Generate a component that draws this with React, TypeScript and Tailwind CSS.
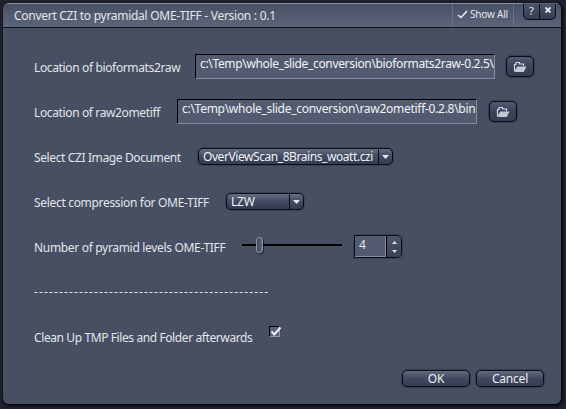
import React from "react";

function Label({ text, width, tracking }: { text: string; width: string; tracking: string }) {
  return <span className={`block shrink-0 pt-[2px] whitespace-pre ${width} ${tracking}`}>{text}</span>;
}

function Row({ children }: { children: React.ReactNode }) {
  return <div className="flex h-[45px] shrink-0 items-center">{children}</div>;
}

function PathField({ value, tracking }: { value: string; tracking: string }) {
  return (
    <div className={`h-[25px] w-[300px] shrink-0 border border-t-black border-r-[#858c9e] border-b-[#858c9e] border-l-black bg-[#535b70] pl-[4px] leading-[17px] whitespace-pre text-[#f1f2f5] ${tracking}`}>
      {value}
    </div>
  );
}

function FolderButton() {
  return (
    <button className="flex h-[21px] w-[28px] shrink-0 items-center justify-center rounded-[5px] border border-[#090d17] bg-linear-to-b from-[#515a70] via-[#3b435a] to-[#353d53] shadow-[0_0_1px_1px_#363e50]">
      <svg width="14" height="12" viewBox="0 0 14 12">
        <path d="M1.5 10V3.5H3V1.5H6.5V3H10.5V5" fill="none" stroke="#d5d8df" strokeWidth="1.2" />
        <path d="M4.2 5.5H13.5L10.8 11H1.2Z" fill="#c3c7d1" />
      </svg>
    </button>
  );
}

function Select({ value, width, tracking }: { value: string; width: string; tracking: string }) {
  return (
    <div className={`flex h-[17px] shrink-0 overflow-hidden rounded-[5px] border border-[#090d17] bg-linear-to-b from-[#646d82] via-[#414a60] to-[#343c52] shadow-[0_0_1px_1px_#3a4254] ${width}`}>
      <span className={`flex-1 pl-[4px] leading-[15px] whitespace-pre text-[#f1f2f5] ${tracking}`}>{value}</span>
      <span className="flex w-[14px] items-center justify-center border-l border-[#090d17]">
        <svg width="7" height="4" viewBox="0 0 7 4">
          <path d="M0 0H7L3.5 4Z" fill="#e4e6eb" />
        </svg>
      </span>
    </div>
  );
}

function PushButton({ text, tracking }: { text: string; tracking: string }) {
  return (
    <button className={`h-[17px] w-[68px] rounded-[5px] border border-[#090d17] bg-linear-to-b from-[#626b80] via-[#414960] via-50% to-[#363e54] text-center leading-[15px] text-[#eceef2] shadow-[0_0_1px_1px_#363e50] ${tracking}`}>
      {text}
    </button>
  );
}

export default function App() {
  return (
    <div className="h-[409px] w-[566px] overflow-hidden bg-[#20232f] pt-[3px] pl-[3px] font-['Noto_Sans','Open_Sans',sans-serif] text-[12px] leading-[16px] text-[#e3e5ea]">
      <div className="flex h-[401px] w-[558px] flex-col overflow-hidden rounded-[6px] bg-[#474f63] shadow-[1px_1px_3px_1px_#06080d]">
        <header className="flex h-[25px] shrink-0 border-t border-b border-t-[#8a90a0] border-b-[#0c1120] bg-linear-to-b from-[#485065] to-[#5d657a]">
          <h1 className="flex-1 pt-[4px] pl-[11px] tracking-[-0.28px] whitespace-pre">Convert CZI to pyramidal OME-TIFF - Version : 0.1</h1>
          <div className="flex w-[62px] items-center border-r border-l border-[#697186] pb-[3px] pl-[4px] text-[10px]">
            <svg width="11" height="9" viewBox="0 0 11 9">
              <path d="M1 5L4 7.5L10 1" fill="none" stroke="#e9ebef" strokeWidth="1.6" />
            </svg>
            <span className="pl-[2px] tracking-[-0.2px] whitespace-nowrap">Show All</span>
          </div>
          <div className="mr-[5px] ml-[9px] flex h-[16px] w-[33px] rounded-b-[5px] border border-t-0 border-[#080c15] bg-linear-to-b from-[#4c5469] to-[#343c52] shadow-[0_0_1px_1px_#555d71]">
            <span className="w-[16px] border-r border-[#080c15] text-center text-[11px] leading-[13px]">?</span>
            <span className="flex w-[15px] items-center justify-center pb-[3px]">
              <svg width="6" height="6" viewBox="0 0 6 6">
                <path d="M0.5 0.5L5.5 5.5M5.5 0.5L0.5 5.5" stroke="#eceef2" strokeWidth="1.8" />
              </svg>
            </span>
          </div>
        </header>

        <main className="flex flex-col pt-[16px] pl-[31px]">
          <Row>
            <Label text="Location of bioformats2raw" width="w-[161px]" tracking="tracking-[-0.36px]" />
            <PathField value="c:\Temp\whole_slide_conversion\bioformats2raw-0.2.5\" tracking="tracking-[-0.34px]" />
            <div className="ml-[11px]"><FolderButton /></div>
          </Row>
          <Row>
            <Label text="Location of raw2ometiff" width="w-[143px]" tracking="tracking-[-0.37px]" />
            <PathField value="c:\Temp\whole_slide_conversion\raw2ometiff-0.2.8\bin" tracking="tracking-[-0.28px]" />
            <div className="ml-[12px]"><FolderButton /></div>
          </Row>
          <Row>
            <Label text="Select CZI Image Document" width="w-[164px]" tracking="tracking-[-0.38px]" />
            <Select value="OverViewScan_8Brains_woatt.czi" width="w-[195px]" tracking="tracking-[-0.43px]" />
          </Row>
          <Row>
            <Label text="Select compression for OME-TIFF" width="w-[192px]" tracking="tracking-[-0.32px]" />
            <Select value="LZW" width="w-[78px]" tracking="tracking-[-0.2px]" />
          </Row>
          <Row>
            <Label text="Number of pyramid levels OME-TIFF" width="w-[208px]" tracking="tracking-[-0.32px]" />
            <div className="mb-[3px] flex h-[16px] w-[100px] shrink-0 items-center">
              <span className="h-[2px] w-[14px] bg-black" />
              <span className="h-[16px] w-[7px] rounded-[3px] border border-[#8b93a3] bg-linear-to-r from-[#3e475b] to-[#5e677b] shadow-[1px_1px_1px_#1b2232]" />
              <span className="h-[2px] flex-1 bg-black" />
            </div>
            <div className="ml-[12px] flex h-[23px] w-[48px] shrink-0 overflow-hidden rounded-r-[5px] border border-[#090d17] shadow-[0_0_1px_1px_#3a4254]">
              <span className="w-[31px] border-r border-b border-[#858c9e] bg-[#535b70] pl-[4px] leading-[17px]">4</span>
              <span className="flex flex-1 flex-col items-center justify-center gap-[6px] border-l border-black bg-linear-to-b from-[#4d556b] to-[#394157]">
                <svg width="5" height="3" viewBox="0 0 5 3"><path d="M0 3H5L2.5 0Z" fill="#dfe1e7" /></svg>
                <svg width="5" height="3" viewBox="0 0 5 3"><path d="M0 0H5L2.5 3Z" fill="#dfe1e7" /></svg>
              </span>
            </div>
          </Row>
          <Row>
            <span className="block whitespace-pre tracking-[1.14px]">-----------------------------------------------</span>
          </Row>
          <Row>
            <Label text="Clean Up TMP Files and Folder afterwards" width="w-[235px]" tracking="tracking-[-0.4px]" />
            <span className="mb-[10px] h-[11px] w-[11px] border border-t-black border-r-[#9299a8] border-b-[#9299a8] border-l-black bg-[#596176]">
              <svg className="block overflow-visible" width="10" height="9" viewBox="0 0 10 9">
                <path d="M1.5 4.5L4.3 7.5L10.5 0.5" fill="none" stroke="#f0f1f4" strokeWidth="2" />
              </svg>
            </span>
          </Row>
        </main>
        <footer className="flex justify-end gap-[6px] pt-[11px] pr-[17px]">
          <PushButton text="OK" tracking="tracking-[-0.2px]" />
          <PushButton text="Cancel" tracking="tracking-[-0.2px]" />
        </footer>
      </div>
    </div>
  );
}
